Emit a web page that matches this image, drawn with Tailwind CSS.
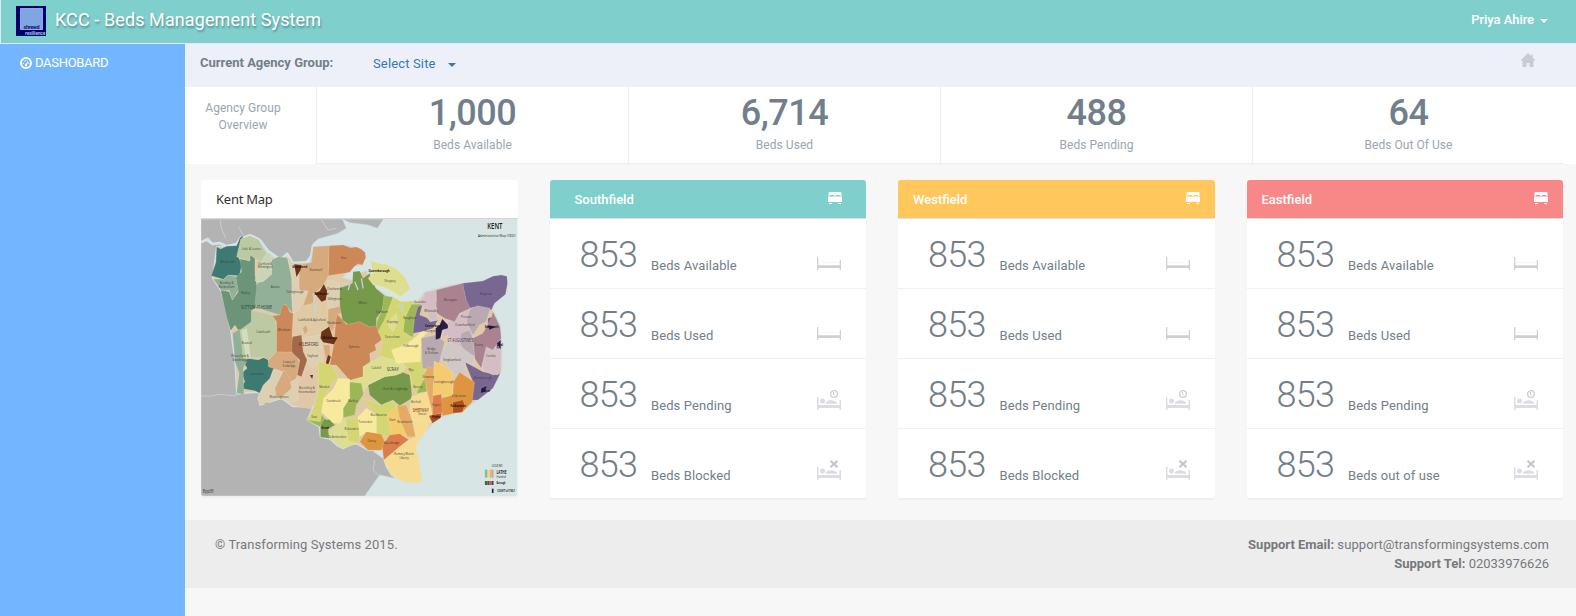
<!DOCTYPE html>
<html lang="en">
<head>
<meta charset="utf-8">
<title>KCC - Beds Management System</title>
<script src="https://cdn.jsdelivr.net/npm/@tailwindcss/browser@4"></script>
</head>
<body class="bg-[#f7f7f7] font-['Roboto',sans-serif] text-[13px] leading-[19px] text-[#737e89]">
<svg class="hidden" xmlns="http://www.w3.org/2000/svg">
  <symbol id="bed" viewBox="0 0 24 20"><path d="M0 7h1.3v8.200h21.400V10H24v10h-1.300v-2H1.300v2H0z" fill="#cfd0d6"/><path d="M2 12.500h20" stroke="#f1f1f4" stroke-width=".6"/></symbol>
  <symbol id="patient" viewBox="0 0 24 20"><path d="M0 7h1.500v8h21V10H24v10h-1.500v-2h-21v2H0z" fill="#dcdde3"/><circle cx="5.500" cy="11" r="2.500" fill="#dcdde3"/><path d="M8.300 13.700q1-3.200 6-3.500q5 0 6.400 3.500z" fill="#dcdde3"/></symbol>
  <symbol id="clock" viewBox="0 0 24 20"><use href="#patient"/><g fill="none" stroke="#cdced5"><circle cx="17" cy="4" r="3.400" stroke-width="1.300"/><path d="M16.500 2v2.300l1.500 1.500"/></g></symbol>
  <symbol id="cross" viewBox="0 0 24 20"><use href="#patient"/><path d="M13.500.8l7 6.500m0-6.500l-7 6.500" stroke="#c5c6cd" stroke-width="2.200"/></symbol>
  <symbol id="double" viewBox="0 0 14 12"><path d="M1.500 0h11q1 0 1 1v3h-1q-.3-.9-1.300-.9H8.700q-1 0-1.200.9h-1q-.2-.9-1.200-.9H2.800q-1 0-1.300.9h-1V1q0-1 1-1zM0 5.200q0-.6.600-.6h12.800q.6 0 .6.600V10H0zM1 11h3v1H1zM10 11h3v1h-3z" fill="#fff"/></symbol>
</svg>

<header class="flex h-[44px] items-start border-b border-l border-[#dfe9ee] bg-[#7fcfcd] pl-[15px] text-white">
  <svg class="mt-[6px] h-[30px] w-[30px]" viewBox="0 0 30 30"><path d="M0 0h30v30H0z" fill="#00006c"/><path d="M4.500 2.500h22v21h-22z" fill="#7fa5e2" stroke="#a5c0ee" stroke-width=".8"/><text x="7.500" y="22.800" font-size="5.500" font-weight="700" fill="#101a70" textLength="16">shrewd</text><text x="9" y="28.900" font-size="5" font-weight="700" fill="#a9bbe8" textLength="20.500">resilience</text></svg>
  <h1 class="ml-[9px] mt-[8px] text-[18px] leading-[24px] tracking-[0.1px] [text-shadow:1px_2px_2px_rgba(0,0,0,.3)]">KCC - Beds Management System</h1>
  <div class="ml-auto mr-[28px] mt-[10px] flex items-center gap-[6px] font-medium tracking-[-0.05px]">Priya Ahire<span class="mt-[3px] h-0 w-0 border-x-4 border-t-4 border-x-transparent border-t-white"></span></div>
</header>

<div class="flex h-[572px]">
  <aside class="w-[185px] shrink-0 bg-[#73b6ff] pl-[20px] pt-[9px] text-white">
    <div class="flex items-center gap-[3px] text-[13px] tracking-[-0.3px]">
      <svg class="h-[12px] w-[12px]" viewBox="0 0 12 12" fill="none" stroke="#fff"><circle cx="6" cy="6" r="5" stroke-width="1.900"/><path d="M6 8l2-3.500" stroke-width="1.200"/><circle cx="6" cy="8" r="1.200" fill="#fff" stroke="none"/><path d="M2.800 6.500h1M3.800 3.900l.8.600M5.700 3v.9M8.400 6.500h1" stroke-width="1"/></svg>
      DASHOBARD
    </div>
  </aside>

  <main class="min-w-0 flex-1">
    <div class="flex h-[43px] items-start bg-[#edf0f8] pl-[15px]">
      <strong class="mt-[9px] w-[173px] font-bold">Current Agency Group:</strong>
      <div class="mt-[10px] flex items-center gap-[12px] tracking-[0.15px] text-[#337ab7]">Select Site<span class="mt-[3px] h-0 w-0 border-x-4 border-t-4 border-x-transparent border-t-[#337ab7]"></span></div>
      <svg class="ml-auto mr-[41px] mt-[9px] h-[14px] w-[14px]" viewBox="0 0 14 14"><path d="M7 0L10 2.900V1.500h1.600v3L14 7v.8h-1.500V14H8.500V10h-3v4h-4V7.800H0V7z" fill="#c9cbd2"/></svg>
    </div>

    <section class="flex h-[77px] bg-white pr-[12px] text-center text-[12px] leading-[17px] tracking-[0.05px] text-[#9ba5b0]">
      <div class="w-[131px] pl-[10px] pr-[25px] pt-[13px]">Agency Group Overview</div>
      <div class="grid flex-1 grid-cols-4 border-b border-[#eeeff2]">
        <div class="border-l border-[#eeeff2] pt-[6px]"><div class="text-[36px] font-medium leading-[40px] tracking-[-0.5px] text-[#727e8b]">1,000</div><div class="mt-[4px]">Beds Available</div></div>
        <div class="border-l border-[#eeeff2] pt-[6px]"><div class="text-[36px] font-medium leading-[40px] tracking-[-0.5px] text-[#727e8b]">6,714</div><div class="mt-[4px]">Beds Used</div></div>
        <div class="border-l border-[#eeeff2] pt-[6px]"><div class="text-[36px] font-medium leading-[40px] tracking-[-0.5px] text-[#727e8b]">488</div><div class="mt-[4px]">Beds Pending</div></div>
        <div class="border-l border-[#eeeff2] pt-[6px]"><div class="text-[36px] font-medium leading-[40px] tracking-[-0.5px] text-[#727e8b]">64</div><div class="mt-[4px]">Beds Out Of Use</div></div>
      </div>
    </section>

    <section id="cards" class="grid grid-cols-4 items-start gap-8 pl-4 pr-[13px] pt-4">
      <article class="overflow-hidden rounded-[3px] bg-white shadow-[0_2px_1px_#eceef3]">
        <h2 class="h-[39px] border-b border-[#d4d8da] pl-[15px] pt-[10px] font-['Noto_Sans','Open_Sans',sans-serif] text-[13px] tracking-[-0.25px] text-[#333]">Kent Map</h2>
        <svg class="block h-[277px] w-full" viewBox="3 132 951 831" preserveAspectRatio="none">
          <path d="M3 132h951v831H3z" fill="#d8e5e5"/>
          <g fill="#b3b3b3" stroke="#cbdbe5" stroke-width="2" stroke-linejoin="round">
            <path d="M3 132H552L533 160 505 150 450 143 428 132 440 160 412 176 355 192 338 208 332 240 320 260 278 262 262 234 244 252 205 225 182 194 160 181 120 186 105 210 80 212 60 203 38 206 25 188 3 200z"/>
            <path d="M3 200L25 192 38 208 60 206 85 220 200 330 400 700 480 800 550 850 585 910 540 900 495 963H3z"/>
            <path d="M60 134L66 165 78 190M115 155L130 180M365 135L385 165 410 160M3 663L35 663 60 658 100 662 130 655 180 650M525 855L520 885 540 903" fill="none"/>
          </g>
          <path d="M3 202L20 194 38 207 58 204 80 214 110 207 125 190 150 181 178 194 205 230 242 255 262 236 278 264 320 262 335 245 340 212 385 200 430 190 480 200" fill="none" stroke="#d5e4ea" stroke-width="8" stroke-linejoin="round"/>
          <path d="M50 215L110 212 125 190 150 182 178 195 205 235 240 257 262 240 276 263 330 262 340 215 430 208 482 220 498 245 488 272 455 274 430 308 460 315 465 290 480 292 500 287 525 335 560 360 600 380 655 378 675 350 750 330 790 325 850 318 880 304 905 300 922 304 924 325 918 358 885 385 880 405 892 425 903 460 906 500 908 545 906 580 880 640 835 675 800 700 760 716 718 730 690 755 655 800 648 830 656 840 667 920 640 924 610 920 575 900 560 875 545 826 505 826 470 806 450 808 430 821 412 812 390 792 362 787 358 755 322 735 340 695 280 695 245 670 180 690 178 652 110 655 105 560 92 465 78 400 62 345 38 310z" stroke="#cfdfe6" stroke-width="4" stroke-linejoin="round" fill="#e0c9a5"/>
          <g stroke="#fff" stroke-opacity=".25" stroke-width="1.500" stroke-linejoin="round">
            <g fill="#3d7a72">
              <path d="M50 215L62 222 80 214 110 212 120 188 130 182 112 240 126 268 118 302 85 300 70 313 34 302 48 262z"/>
              <path d="M130 560L145 550 175 555 190 548 203 552 210 570 225 580 215 605 205 620 200 645 180 655 165 647 120 640 135 620 125 595 142 580z"/>
              <path d="M182 680L200 672 205 685 182 688z"/>
            </g>
            <path d="M120 252L150 258 150 240 165 240 165 300 172 340 168 395 155 408 155 440 118 470 105 450 92 467 80 425 62 345 88 350 97 375 115 350 105 310 125 290z" fill="#6b9479"/>
            <g fill="#92af97">
              <path d="M40 312L70 313 85 300 108 305 115 345 97 375 88 345 65 348z"/>
              <path d="M190 318L215 298 215 255 235 245 262 248 278 310 275 360 278 415 255 388 240 420 175 400 165 385 172 325z"/>
              <path d="M98 475L120 462 140 560 130 580 132 658 110 655 118 595 105 560z"/>
            </g>
            <g fill="#bdc9a3">
              <path d="M122 192L150 182 176 194 200 235 182 262 150 240 150 258 110 246z"/>
              <path d="M155 405L225 422 230 470 230 530 205 555 190 546 130 553 120 465 155 440z"/>
            </g>
            <path d="M182 262L205 232 215 240 215 298 190 320 165 318 175 285z" fill="#ccd4b7"/>
            <path d="M125 467L140 460 152 550 138 545z" fill="#d5ddbe"/>
            <g fill="#cc8856">
              <path d="M218 422L240 420 248 388 262 392 270 412 280 415 276 490 300 485 275 530 230 540 230 440z"/>
              <path d="M388 212L430 210 452 218 470 216 484 222 496 232 498 248 488 270 475 266 462 276 450 292 385 302z"/>
              <path d="M410 415L440 448 480 440 510 456 528 450 540 470 545 495 525 510 530 525 510 535 512 565 490 575 490 605 450 616 410 570 390 570 402 510z"/>
            </g>
            <g fill="#ddd0b2">
              <path d="M262 242L280 264 300 268 298 345 325 348 300 400 280 418 275 310z"/>
              <path d="M385 315L420 325 422 360 428 400 385 402 380 350z"/>
              <path d="M220 582L250 588 290 610 295 675 270 682 240 672 180 690 172 670 190 630 210 610z"/>
              <path d="M310 488L365 480 368 560 340 578 325 570 320 540z"/>
            </g>
            <g fill="#d7aa7d">
              <path d="M298 270L335 262 340 215 388 212 385 302 372 330 345 355 340 385 310 392 325 348 298 345z"/>
              <path d="M385 402L425 392 430 410 412 420 400 470 385 455z"/>
              <path d="M205 555L230 530 285 532 298 560 290 610 265 625 250 590 205 575z"/>
              <path d="M225 640L252 585 270 610 275 640 245 667 228 660z"/>
              <path d="M370 510L390 510 392 565 380 560z"/>
              <path d="M308 460L318 450 325 465 315 480z"/>
            </g>
            <path d="M295 625L322 578 345 590 356 620 352 660 335 702 278 692 295 670z" fill="#e0c7a8"/>
            <path d="M278 485L305 480 310 530 322 555 305 605 292 600 300 555 275 530z" fill="#a2694d"/>
            <g fill="#6b3318" stroke="none">
              <path d="M283 268L305 270 302 285 290 306z"/><path d="M345 355L360 348 372 328 382 348 378 375 365 380z"/>
              <path d="M365 470L388 455 398 485 412 490 402 508 370 502 362 490z"/><path d="M385 540L393 545 385 570 378 565z"/><path d="M330 600L340 600 337 612z"/>
            </g>
            <g fill="#77994a">
              <path d="M420 340L458 325 460 290 480 288 490 310 510 295 528 340 555 362 548 405 530 430 530 452 510 456 480 440 445 448 428 435 420 390z"/>
              <path d="M505 630L555 605 590 600 605 590 630 600 635 640 637 670 600 692 580 675 545 690 510 660z"/>
              <path d="M362 728L385 735 390 725 405 750 385 762 388 790 362 787z"/>
            </g>
            <g fill="#9db757">
              <path d="M552 362L580 366 565 430 552 440 535 470 530 452 535 430 548 405z"/>
              <path d="M635 388L668 388 645 440 640 490 610 470 615 430z"/>
              <path d="M440 625L465 615 492 625 490 660 470 690 465 720 430 728 430 700 450 670z"/>
              <path d="M320 735L345 700 375 730 360 755z"/>
              <path d="M655 590L675 588 682 650 650 655z"/>
            </g>
            <g fill="#d4d672">
              <path d="M580 366L605 380 645 377 635 388 615 430 610 470 645 490 600 515 600 560 540 545 548 495 535 470 552 440z"/>
              <path d="M355 560L395 570 415 605 400 620 372 670 362 740 322 735 345 690 356 640z"/>
              <path d="M490 672L545 690 575 678 592 690 570 740 575 785 530 780 530 720z"/>
              <path d="M610 565L665 530 680 600 650 655 640 640 630 590z"/>
              <path d="M438 730L475 730 482 760 478 800 445 798z"/>
            </g>
            <g fill="#dede91">
              <path d="M512 255L535 265 560 268 590 280 608 300 618 310 632 342 602 366 580 350 550 336 520 330 505 310 518 295z"/>
              <path d="M490 575L512 560 545 545 600 560 620 575 605 595 590 600 555 605 505 630 490 650 485 625 440 620 490 605z"/>
              <path d="M388 770L435 730 445 798 470 806 430 821 390 792z"/>
              <path d="M575 430L590 415 595 440 580 470 565 450z"/>
            </g>
            <g fill="#f8ea9c">
              <path d="M402 640L415 610 450 612 450 670 430 700 430 728 420 745 400 745 365 710 372 670z"/>
              <path d="M575 525L620 510 655 480 680 450 685 470 665 490 662 560 590 565z"/>
              <path d="M475 725L500 700 530 720 530 780 500 770 480 785z"/>
            </g>
            <g fill="#776791">
              <path d="M640 475L645 430 655 395 668 390 660 420 682 428 692 440 715 435 700 460 665 470z"/>
              <path d="M788 325L850 318 880 304 905 300 922 304 924 325 918 358 885 385 875 405 840 395 805 400 798 370z"/>
              <path d="M795 560L850 590 895 600 905 570 900 600 880 640 835 675 810 675 822 625z"/>
              <path d="M865 430L880 425 890 460 865 465zM893 500L905 495 905 520 890 522zM706 380L718 375 715 395 704 397z"/>
            </g>
            <g fill="#d4bec3">
              <path d="M675 352L712 345 710 405 715 435 692 440 682 412 665 388z"/>
              <path d="M770 430L800 395 815 410 800 440 820 480 800 540 760 520 745 480 725 490 745 440z"/>
              <path d="M850 540L860 510 888 520 905 525 905 595 880 600 850 585z"/>
            </g>
            <g fill="#aa8290">
              <path d="M710 345L790 325 798 370 812 400 780 415 765 440 735 430 712 415z"/>
              <path d="M875 430L880 410 902 455 905 490 880 525 860 515 845 580 825 550 820 490 850 475z"/>
            </g>
            <g fill="#b9aab1">
              <path d="M812 400L835 392 872 400 860 440 840 450 820 480 800 440z"/>
              <path d="M665 490L705 480 735 500 720 560 700 585 668 580z"/>
              <path d="M785 475L810 465 820 490 825 545 795 530 780 500z"/>
            </g>
            <path d="M722 545L745 500 790 520 825 545 820 570 798 562 800 600 765 600z" fill="#d0c8c6"/>
            <path d="M708 460L720 450 728 432 745 450 745 460 728 465 722 490 708 494z" fill="#291b48"/>
            <path d="M863 450L890 455 870 465zM845 640L862 632 858 650 843 655zM893 505L903 495 903 525z" fill="#291b48"/>
            <path d="M703 558L730 570 760 595 758 660 700 665z" fill="#f4cb6e"/>
            <g fill="#e5ab63"><path d="M672 600L685 575 703 580 700 665 705 725 685 715 690 680z"/><path d="M592 692L620 690 632 720 648 785 622 785 595 730z"/></g>
            <path d="M562 720L592 692 600 730 622 785 575 780z" fill="#f4cb6e"/>
            <path d="M635 665L680 650 695 700 700 740 640 738 630 710z" fill="#f6db93"/>
            <g fill="#df953f">
              <path d="M762 620L780 592 825 622 818 680 790 710 728 722 725 670 760 660z"/>
              <path d="M480 800L500 770 545 778 555 800 545 826 505 826z"/>
            </g>
            <g fill="#dd7d48"><path d="M700 662L725 658 730 712 700 722z"/><path d="M548 812L570 780 600 776 628 795 600 815 552 855z"/></g>
            <g fill="#b04f1c"><path d="M760 682L790 675 795 690 788 712 760 714z"/><path d="M688 722L726 715 722 730 698 745z"/></g>
            <path d="M552 857L600 815 626 795 648 785 640 732 695 738 675 775 655 800 650 825 656 840 667 920 640 924 610 920 575 900z" fill="#f6db93"/>
          </g>
          <path d="M430 325L450 330 445 345M465 320L475 345M485 310L490 340M590 395L610 390 605 410M340 355L345 385 348 420" fill="none" stroke="#bdd7df" stroke-width="4"/>
          <g font-size="8.500" fill="#453f38" text-anchor="middle" font-family="Open Sans, sans-serif">
            <text x="83" y="265">Blackheath</text><text x="154" y="226">Little &amp; Lesnes</text><text x="196" y="270">Dartford &amp;</text><text x="196" y="280">Wilmington</text><text x="80" y="328">Bromley &amp;</text><text x="80" y="338">Beckenham</text><text x="137" y="356">Ruxley</text><text x="226" y="338">Axtane</text><text x="190" y="473">Codsheath</text><text x="252" y="467">Wrotham</text><text x="285" y="355">Toltingtrough</text><text x="348" y="289">Shamwell</text><text x="432" y="251">Hoo</text><text x="404" y="346">Chatham &amp;</text><text x="404" y="374">Gillingham</text><text x="336" y="437">Larkfield &amp; Aylesford</text><text x="403" y="447">Maidstone</text><text x="489" y="388">Milton</text><text x="172" y="601">Somerden</text><text x="120" y="547">Westerham &amp;</text><text x="120" y="558">Edenbridge</text><text x="140" y="507">Brasted</text><text x="267" y="565">Lowey of</text><text x="267" y="576">Tonbridge</text><text x="238" y="669">Washlingstone</text><text x="321" y="643">Brenchley &amp;</text><text x="321" y="655">Horsmonden</text><text x="338" y="545">Twyford</text><text x="374" y="639">Marden</text><text x="401" y="682">Cranbrook</text><text x="460" y="681">Barkley</text><text x="464" y="518">Eyhorne</text><text x="343" y="728">East</text><text x="413" y="790">Selbrittenden</text><text x="455" y="766">Rolvenden</text><text x="497" y="745">Tenterden</text><text x="516" y="801">Oxney</text><text x="530" y="583">Calehill</text><text x="587" y="645">Chart &amp; Longbridge</text><text x="537" y="722">Blackbourne</text><text x="578" y="738">Ham</text><text x="615" y="745">Newchurch</text><text x="576" y="806">Aloesbridge</text><text x="613" y="841">Romney Marsh</text><text x="613" y="852">Liberty</text><text x="571" y="320">Sheppey</text><text x="546" y="414">Teynham</text><text x="579" y="444">Ospringe</text><text x="578" y="490">Faversham</text><text x="630" y="433">Boughton</text><text x="634" y="517">Felborough</text><text x="635" y="588">Wye</text><text x="662" y="384">Seasalter</text><text x="694" y="410">Whitstable</text><text x="753" y="379">Bleangate</text><text x="858" y="359">Ringslow</text><text x="800" y="428">Preston</text><text x="796" y="453">Downhamford</text><text x="692" y="472">Westgate</text><text x="696" y="524">Bridge</text><text x="696" y="536">&amp; Petham</text><text x="757" y="557">Kinghamford</text><text x="838" y="512">Eastry</text><text x="874" y="545">Cornilo</text><text x="850" y="613">Bewsborough</text><text x="733" y="625">Loningborough</text><text x="778" y="667">Folkestone</text><text x="710" y="694">Hayne</text><text x="686" y="610">Stowting</text><text x="649" y="685">Bircholt</text><text x="668" y="721">Street</text><text x="655" y="640">Barony</text>
            <g font-weight="700" fill="#1d120d"><text x="300" y="278">Gravesend</text><text x="365" y="360">Rochester</text><text x="390" y="492">Maidstone</text><text x="538" y="291">Queenborough</text><text x="700" y="455">Canterbury</text><text x="876" y="460">Sandwich</text><text x="860" y="650">Dover</text><text x="776" y="697">Folkestone</text><text x="710" y="730">Hythe</text><text x="376" y="761">Great</text><text x="901" y="513">Deal</text></g>
          </g>
          <g font-size="18" fill="#263f37" font-family="Open Sans, sans-serif" font-weight="500">
            <text x="123" y="401" textLength="93" lengthAdjust="spacingAndGlyphs">SUTTON-AT-HOME</text><text x="296" y="512" textLength="60" lengthAdjust="spacingAndGlyphs" fill="#52261a">AYLESFORD</text><text x="561" y="589" textLength="36" lengthAdjust="spacingAndGlyphs">SCRAY</text><text x="639" y="711" textLength="48" lengthAdjust="spacingAndGlyphs" fill="#712a14">SHEPWAY</text><text x="744" y="500" textLength="78" lengthAdjust="spacingAndGlyphs" fill="#44345c">ST AUGUSTINE'S</text>
          </g>
          <g font-family="Open Sans, sans-serif" fill="#222">
            <text x="863" y="163" font-size="26" font-weight="600" textLength="46" lengthAdjust="spacingAndGlyphs">KENT</text><text x="835" y="185" font-size="13" textLength="113" lengthAdjust="spacingAndGlyphs">Administrative Map (1832)</text>
            <text x="877" y="875" font-size="13" textLength="32" lengthAdjust="spacingAndGlyphs">LEGEND</text><text x="891" y="897" font-size="18" font-weight="700" textLength="30" lengthAdjust="spacingAndGlyphs">LATHE</text><text x="891" y="909" font-size="9" textLength="28" lengthAdjust="spacingAndGlyphs">Hundred</text><text x="891" y="928" font-size="12" font-weight="700" textLength="27" lengthAdjust="spacingAndGlyphs">Borough</text><text x="893" y="951" font-size="10" font-weight="700" textLength="53" lengthAdjust="spacingAndGlyphs">COUNTY of ITSELF</text>
            <text x="8" y="955" font-size="17" font-style="italic" font-family="Liberation Serif, serif" textLength="32" lengthAdjust="spacingAndGlyphs">Fayz33</text>
          </g>
          <path d="M856 884h8v24h-8z" fill="#8fb497"/><path d="M864 884h7v24h-7z" fill="#e9dc88"/><path d="M871 884h6v24h-6z" fill="#e8b36a"/><path d="M877 884h5v24h-5z" fill="#c4a5ae"/><path d="M856 918h8v12h-8z" fill="#35685c"/><path d="M864 918h6v12h-6z" fill="#74452b"/><path d="M870 918h6v12h-6z" fill="#c4642d"/><path d="M876 918h6v12h-6z" fill="#554071"/><path d="M877 941h5v13h-5z" fill="#291b48"/>
        </svg>
      </article>
    </section>

    <footer class="mt-[22px] flex h-[68px] justify-between bg-[#ededed] pl-[30px] pr-[27px] pt-[15px] text-[#76797e]">
      <p class="tracking-[0.1px]">© Transforming Systems 2015.</p>
      <p class="text-right"><b>Support Email:</b> <span class="tracking-[0.08px]">support@transformingsystems.com</span><br><b>Support Tel:</b> 02033976626</p>
    </footer>
  </main>
</div>

<script>
  const sites = [
    { name: "Southfield", head: "bg-[#7fcfcd] pl-[25px] pr-[24px]", last: "Beds Blocked" },
    { name: "Westfield", head: "bg-[#ffc75c] px-[15px]", last: "Beds Blocked" },
    { name: "Eastfield", head: "bg-[#f88887] px-[15px]", last: "Beds out of use" }
  ];
  const row = (label, icon, size) => `
    <div class="flex ${size} pl-[30px] pr-[25px]">
      <span class="mt-[15px] w-[71px] text-[36px] font-light leading-[42px] tracking-[-0.7px]">853</span>
      <span class="mt-[37px] pl-[0.5px] tracking-[0.1px]">${label}</span>
      <svg class="ml-auto mt-[31px] h-[20px] w-[24px]"><use href="#${icon}"/></svg>
    </div>`;
  const line = "h-[70px] border-b border-[#edf0f8]";
  document.getElementById("cards").insertAdjacentHTML("beforeend", sites.map(s => `
    <article class="overflow-hidden rounded-[3px] bg-white shadow-[0_2px_1px_#eceef3]">
      <h2 class="flex h-[39px] justify-between border-b border-[#d9dfe4] pt-[10px] font-medium text-white ${s.head}">${s.name}<svg class="mt-[2px] h-[12px] w-[14px]"><use href="#double"/></svg></h2>
      ${row("Beds Available", "bed", line)}${row("Beds Used", "bed", line)}${row("Beds Pending", "clock", line)}${row(s.last, "cross", "h-[69px]")}
    </article>`).join(""));
</script>
</body>
</html>
